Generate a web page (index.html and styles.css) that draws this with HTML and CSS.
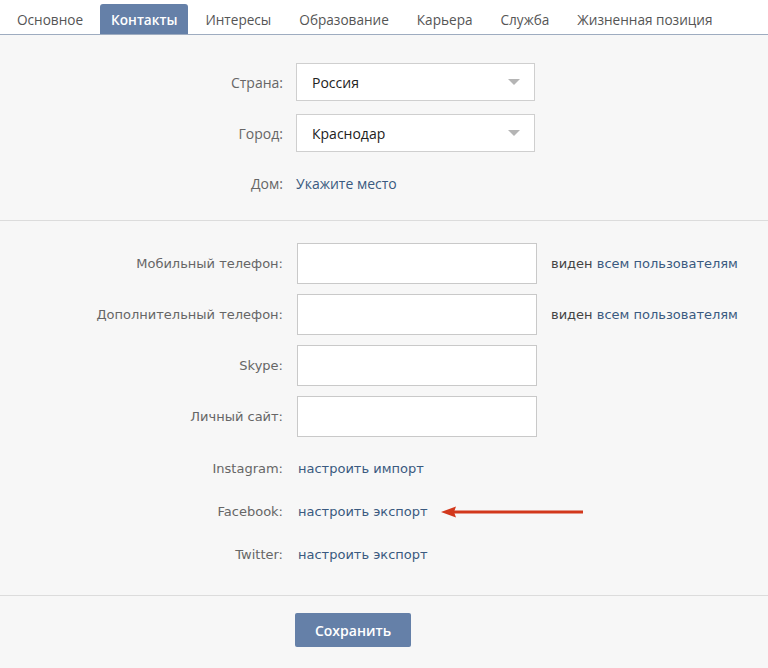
FILE: index.html
```html
<!DOCTYPE html>
<html lang="ru">
<head>
  <meta charset="utf-8" />
  <title>Редактирование страницы</title>
  <link rel="stylesheet" href="styles.css">
</head>
<body>

  <!-- вкладки -->
  <div class="tabs">
    <a class="tab" href="#">Основное</a>
    <a class="tab tab-active" href="#">Контакты</a>
    <a class="tab" href="#">Интересы</a>
    <a class="tab" href="#">Образование</a>
    <a class="tab" href="#">Карьера</a>
    <a class="tab" href="#">Служба</a>
    <a class="tab" href="#">Жизненная позиция</a>
  </div>

  <!-- место проживания -->
  <div class="section section-place">
    <div class="row row-field">
      <div class="label">Страна:</div>
      <div class="select"><span>Россия</span><i class="caret"></i></div>
    </div>
    <div class="row row-field">
      <div class="label">Город:</div>
      <div class="select"><span>Краснодар</span><i class="caret"></i></div>
    </div>
    <div class="row row-link">
      <div class="label">Дом:</div>
      <a class="link" href="#">Укажите место</a>
    </div>
  </div>

  <!-- контакты -->
  <div class="section section-contacts">
    <div class="row row-input">
      <div class="label">Мобильный телефон:</div>
      <input type="text" class="field" />
      <div class="privacy">виден <a class="link" href="#">всем пользователям</a></div>
    </div>
    <div class="row row-input">
      <div class="label">Дополнительный телефон:</div>
      <input type="text" class="field" />
      <div class="privacy">виден <a class="link" href="#">всем пользователям</a></div>
    </div>
    <div class="row row-input">
      <div class="label">Skype:</div>
      <input type="text" class="field" />
    </div>
    <div class="row row-input">
      <div class="label">Личный сайт:</div>
      <input type="text" class="field" />
    </div>
    <div class="row row-social">
      <div class="label">Instagram:</div>
      <a class="link social-link" href="#">настроить импорт</a>
    </div>
    <div class="row row-social">
      <div class="label">Facebook:</div>
      <a class="link social-link" href="#">настроить экспорт</a>
      <svg class="pointer" width="143" height="12" viewBox="0 0 143 12">
        <line x1="12" y1="6" x2="142" y2="6" stroke="#d2381c" stroke-width="3" />
        <polygon points="0,6 15,0.5 13,6 15,11.5" fill="#d2381c" />
      </svg>
    </div>
    <div class="row row-social">
      <div class="label">Twitter:</div>
      <a class="link social-link" href="#">настроить экспорт</a>
    </div>
  </div>

  <!-- сохранить -->
  <div class="section section-save">
    <button class="save-button">Сохранить</button>
  </div>

</body>
</html>
```

FILE: styles.css
```css
body {
  margin: 0;
  background-color: #f7f7f7;
  font-family: "DejaVu Sans", Tahoma, sans-serif;
  font-size: 13px;
  color: #222;
}

a {
  text-decoration: none;
}

.tabs {
  display: flex;
  gap: 6px;
  height: 34px;
  padding-left: 6px;
  background-color: #fff;
  border-bottom: 1px solid #9eacc0;
  font-family: "Open Sans", sans-serif;
  font-size: 13.6px;
}

.tab {
  display: flex;
  align-items: center;
  margin-top: 4px;
  padding: 0 11px;
  color: #555;
  border-radius: 3px 3px 0 0;
}

.tab-active {
  background-color: #6580a8;
  color: #fff;
  font-weight: 600;
}

.section {
  border-top: 1px solid #dcdcdc;
}

.section-place {
  border-top: none;
  padding: 28px 0 19px;
  font-family: "Open Sans", sans-serif;
  font-size: 14px;
}

.section-contacts {
  padding: 22px 0 19px;
}

.section-save {
  padding: 17px 0 0 295px;
}

.row {
  display: flex;
  align-items: center;
}

.label {
  width: 296px;
  padding-right: 13px;
  box-sizing: border-box;
  text-align: right;
  color: #666;
}

.row-field {
  margin-bottom: 13px;
}

.row-link {
  height: 36px;
}

.link {
  color: #3a5a80;
}

.select {
  display: flex;
  align-items: center;
  justify-content: space-between;
  width: 239px;
  height: 38px;
  box-sizing: border-box;
  padding: 0 14px 0 15px;
  background-color: #fff;
  border: 1px solid #cfcfcf;
}

.caret {
  width: 0;
  height: 0;
  border-left: 6px solid transparent;
  border-right: 6px solid transparent;
  border-top: 6px solid #b5b5b5;
}

.row-input {
  margin-bottom: 10px;
}

.row-input .label {
  width: 297px;
  padding-right: 14px;
}

.field {
  width: 240px;
  height: 41px;
  box-sizing: border-box;
  margin: 0;
  border: 1px solid #c9c9c9;
  background-color: #fff;
}

.privacy {
  margin-left: 14px;
  color: #444;
}

.row-social {
  height: 43px;
}

.row-social .label {
  width: 298px;
  padding-right: 15px;
}

.pointer {
  margin-left: 13px;
}

.save-button {
  width: 116px;
  height: 34px;
  border: none;
  border-radius: 2px;
  background-color: #6580a8;
  color: #fff;
  font-family: "Open Sans", sans-serif;
  font-size: 14px;
  font-weight: 600;
}
```
